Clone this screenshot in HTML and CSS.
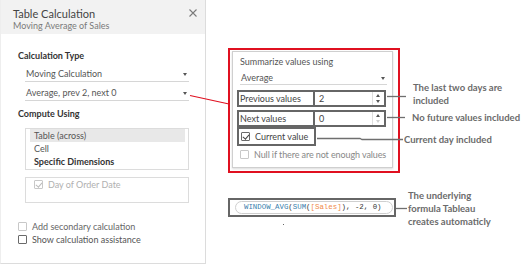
FILE: index.html
```html
<!DOCTYPE html>
<html lang="en">
<head>
    <meta charset="UTF-8">
    <title>Table Calculation - Moving Average</title>
    <link rel="stylesheet" href="styles.css">
</head>
<body>
    <div class="page">
        <div class="panel">
            <div class="panel-header">
                <div class="panel-title">Table Calculation</div>
                <div class="panel-subtitle">Moving Average of Sales</div>
                <svg class="close" width="8" height="8" viewBox="0 0 8 8">
                    <path d="M0.5 0.5 L7.5 7.5 M7.5 0.5 L0.5 7.5" stroke="#7a7a7a" stroke-width="1.1" fill="none"/>
                </svg>
            </div>
            <div class="panel-body">
                <div class="section-title first">Calculation Type</div>
                <div class="dropdown">Moving Calculation<span class="caret"></span></div>
                <div class="dropdown second">Average, prev 2, next 0<span class="caret"></span></div>

                <div class="section-title">Compute Using</div>
                <div class="list-box">
                    <div class="list-item selected">Table (across)</div>
                    <div class="list-item">Cell</div>
                    <div class="list-item bold">Specific Dimensions</div>
                </div>
                <div class="dims-box">
                    <div class="check-row disabled">
                        <span class="check checked light"></span>Day of Order Date
                    </div>
                </div>

                <div class="options">
                    <div class="check-row faint"><span class="check light"></span>Add secondary calculation</div>
                    <div class="check-row"><span class="check dark"></span>Show calculation assistance</div>
                </div>
            </div>
        </div>

        <div class="right">
            <div class="highlight">
                <div class="moving-panel">
                    <div class="label">Summarize values using</div>
                    <div class="dropdown small">Average<span class="caret"></span></div>

                    <div class="spin-row">
                        <div class="spin-label">Previous values</div>
                        <div class="spin-field">
                            <span class="spin-value">2</span>
                            <span class="spinner">
                                <span class="arrow up"></span>
                                <span class="arrow down"></span>
                            </span>
                        </div>
                    </div>
                    <div class="spin-row next">
                        <div class="spin-label">Next values</div>
                        <div class="spin-field">
                            <span class="spin-value">0</span>
                            <span class="spinner">
                                <span class="arrow up"></span>
                                <span class="arrow down off"></span>
                            </span>
                        </div>
                    </div>
                    <div class="current-box">
                        <span class="check checked dark"></span>Current value
                    </div>
                    <div class="check-row null-row"><span class="check light"></span>Null if there are not enough values</div>
                </div>
            </div>

            <div class="formula-box">
                <div class="formula-pill">
                    <span class="fn">WINDOW_AVG</span>(<span class="fn">SUM</span>(<span class="field">[Sales]</span>), -2, 0)
                </div>
            </div>
            <div class="speck"></div>
        </div>

        <svg class="connectors" width="531" height="265" viewBox="0 0 531 265">
            <line x1="190" y1="95.5" x2="229" y2="104" stroke="#e01020" stroke-width="1.2"/>
            <line x1="387" y1="96.5" x2="406" y2="96.5" stroke="#6f6f6f" stroke-width="1.3"/>
            <line x1="387" y1="117.5" x2="405" y2="117.5" stroke="#6f6f6f" stroke-width="1.3"/>
            <polyline points="317,138.5 360,138.5 362,139.5 403,139.5" stroke="#6f6f6f" stroke-width="1.3" fill="none"/>
            <line x1="396" y1="208.5" x2="407" y2="208.5" stroke="#6f6f6f" stroke-width="1.3"/>
        </svg>

        <div class="note note-prev">The last two days are<br>included</div>
        <div class="note note-next">No future values included</div>
        <div class="note note-current">Current day included</div>
        <div class="note note-formula">The underlying<br>formula Tableau<br>creates automaticly</div>
    </div>
</body>
</html>
```

FILE: styles.css
```css
:root {
    --text-color: #444;
    --muted: #7a7a7a;
    --frame: #666;
    --red: #e01020;
}

* {
    margin: 0;
    padding: 0;
    box-sizing: border-box;
}

body {
    font-family: 'Lato', 'Open Sans', sans-serif;
    background-color: #ffffff;
    color: var(--text-color);
    width: 531px;
    height: 265px;
    overflow: hidden;
}

.page {
    position: relative;
    display: flex;
    width: 531px;
    height: 265px;
}

/* left side: the Tableau dialog */

.panel {
    width: 206px;
    height: 264px;
    border: 1px solid #dcdcdc;
    border-left-color: #eeeeee;
    border-top: none;
}

.panel-header {
    position: relative;
    height: 34px;
    background-color: #f2f2f2;
    padding: 7px 0 0 12px;
}

.panel-title {
    font-size: 11px;
    line-height: 13px;
    color: #444;
}

.panel-subtitle {
    font-size: 9px;
    line-height: 11px;
    color: var(--muted);
}

.close {
    position: absolute;
    right: 8px;
    top: 9px;
}

.panel-body {
    padding: 0 16px 0 17px;
}

.section-title {
    font-size: 9px;
    font-weight: 700;
    line-height: 12px;
    color: #333;
    margin-top: 7px;
}

.section-title.first {
    margin-top: 16px;
}

.dropdown {
    position: relative;
    margin: 2px 0 0 7px;
    padding: 4px 0 1px 1px;
    font-size: 9px;
    line-height: 12px;
    color: #555;
    border-bottom: 1px solid #d6d6d6;
}

.dropdown.second {
    margin-top: 1px;
}

.caret {
    position: absolute;
    right: 2px;
    top: 9px;
    border-left: 2.5px solid transparent;
    border-right: 2.5px solid transparent;
    border-top: 3px solid #555;
}

.list-box {
    margin: 8px 0 0 7px;
    border: 1px solid #dcdcdc;
    padding: 0 3px 1px 4px;
}

.list-item {
    height: 13px;
    line-height: 13px;
    padding-left: 4px;
    font-size: 9px;
    color: #555;
}

.list-item.selected {
    background-color: #e8e8e8;
}

.list-item.bold {
    font-weight: 700;
    color: #333;
}

.dims-box {
    margin: 7px 0 0 7px;
    height: 26px;
    border: 1px solid #dcdcdc;
    padding: 2px 0 0 8px;
}

.check-row {
    display: flex;
    align-items: center;
    font-size: 9px;
    line-height: 13px;
    color: #555;
    white-space: nowrap;
}

.check-row.disabled {
    color: #b0b0b0;
    line-height: 9px;
}

.check-row.faint {
    color: #666;
}

.check {
    position: relative;
    display: inline-block;
    width: 9px;
    height: 9px;
    border: 1px solid #c8c8c8;
    border-radius: 1px;
    margin-right: 5px;
    flex-shrink: 0;
    background: #fff;
}

.check.dark {
    border-color: #6a6a6a;
}

.check.checked::after {
    content: '';
    position: absolute;
    left: 2px;
    top: 0px;
    width: 2.5px;
    height: 5px;
    border-right: 1.2px solid #444;
    border-bottom: 1.2px solid #444;
    transform: rotate(40deg);
}

.check.light.checked::after {
    border-color: #bbb;
}

.options {
    margin-top: 17px;
}

.options .check-row {
    height: 13px;
}

/* right side: moving calculation options */

.right {
    position: relative;
    margin-left: 22px;
    padding-top: 48px;
}

.highlight {
    width: 172px;
    height: 125px;
    border: 2px solid var(--red);
    padding: 1px 5px 3px 2px;
}

.moving-panel {
    height: 117px;
    border: 1px solid #cfcfcf;
    box-shadow: 0 1px 2px rgba(0, 0, 0, 0.15);
    padding: 4px 5px 0 7px;
}

.label {
    font-size: 9px;
    line-height: 12px;
    color: #555;
}

.dropdown.small {
    margin: 4px 0 0 0;
    padding: 0 0 0 1px;
}

.dropdown.small .caret {
    top: 5px;
}

.spin-row {
    display: flex;
    height: 17px;
    margin: 5px 1px 0 -3px;
    font-size: 9px;
    color: #444;
}

.spin-row.next {
    margin-top: 3px;
}

.spin-label {
    width: 78px;
    border: 2px solid var(--frame);
    padding-left: 1px;
    line-height: 13px;
}

.spin-field {
    flex: 1;
    display: flex;
    border: 2px solid var(--frame);
    border-left: none;
}

.spin-value {
    flex: 1;
    padding-left: 4px;
    line-height: 13px;
}

.spinner {
    width: 11px;
    margin-right: 1px;
    border-left: 1px solid #dedede;
    display: flex;
    flex-direction: column;
    align-items: center;
    justify-content: space-around;
}

.arrow {
    border-left: 2.5px solid transparent;
    border-right: 2.5px solid transparent;
}

.arrow.up {
    border-bottom: 3px solid #555;
}

.arrow.down {
    border-top: 3px solid #555;
}

.arrow.down.off {
    border-top-color: #cfcfcf;
}

.current-box {
    display: flex;
    align-items: center;
    width: 79px;
    height: 19px;
    margin-left: -3px;
    border: 2px solid var(--frame);
    padding-left: 2px;
    font-size: 9px;
    color: #444;
}

.check-row.null-row {
    margin-top: 2px;
    color: #888;
    letter-spacing: -0.1px;
}

.formula-box {
    width: 168px;
    height: 19px;
    margin-top: 25px;
    border: 2px solid var(--frame);
    padding: 1px 1px 0 5px;
}

.formula-pill {
    height: 13px;
    border: 1px solid #cfcfcf;
    border-radius: 7px;
    padding-left: 8px;
    font-family: 'Liberation Mono', 'DejaVu Sans Mono', monospace;
    font-size: 7.4px;
    line-height: 11px;
    color: #333;
    white-space: nowrap;
}

.fn {
    color: #3a7fae;
}

.field {
    color: #f08a4b;
}

.speck {
    width: 1px;
    height: 1px;
    margin: 7px 0 0 55px;
    background-color: #666;
}

/* annotations */

.connectors {
    position: absolute;
    left: 0;
    top: 0;
    pointer-events: none;
}

.note {
    position: absolute;
    font-size: 9.5px;
    font-weight: 700;
    line-height: 13px;
    color: #6b6b6b;
    white-space: nowrap;
}

.note-prev {
    left: 413px;
    top: 81px;
}

.note-next {
    left: 412px;
    top: 111px;
}

.note-current {
    left: 404px;
    top: 133px;
}

.note-formula {
    left: 408px;
    top: 189px;
}
```
